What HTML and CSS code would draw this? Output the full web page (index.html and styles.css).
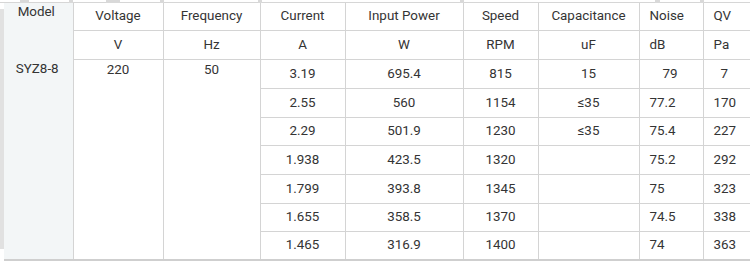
FILE: index.html
```html
<!DOCTYPE html>
<html>
<head>
<meta charset="utf-8">
<link rel="stylesheet" href="styles.css">
</head>
<body>
<div class="topbar">
  <span class="mk m1"></span><span class="mk m2"></span><span class="mk m3"></span><span class="mk m4"></span><span class="mk m5"></span><span class="mk m6"></span><span class="mk m7"></span><span class="mk m8"></span>
</div>
<div class="frame">
  <div class="strip"></div>
  <table class="spec">
    <colgroup>
      <col class="c-model"><col class="c-volt"><col class="c-freq"><col class="c-cur"><col class="c-pow"><col class="c-spd"><col class="c-cap"><col class="c-noise"><col class="c-qv">
    </colgroup>
    <tr class="hdr">
      <td class="model" rowspan="9"><div class="model-h">Model</div><div class="model-v">SYZ8-8</div></td>
      <td class="ctr">Voltage</td>
      <td class="ctr">Frequency</td>
      <td class="ctr">Current</td>
      <td class="ctr">Input Power</td>
      <td class="ctr nl">Speed</td>
      <td class="ctr nl">Capacitance</td>
      <td class="lft">Noise</td>
      <td class="lft">QV</td>
    </tr>
    <tr class="unit">
      <td class="ctr">V</td>
      <td class="ctr">Hz</td>
      <td class="ctr">A</td>
      <td class="ctr">W</td>
      <td class="ctr dl">RPM</td>
      <td class="ctr dl">uF</td>
      <td class="lft">dB</td>
      <td class="lft">Pa</td>
    </tr>
    <tr class="row">
      <td class="ctr top" rowspan="7">220</td>
      <td class="ctr top" rowspan="7">50</td>
      <td class="ctr">3.19</td>
      <td class="ctr">695.4</td>
      <td class="ctr dl">815</td>
      <td class="ctr dl">15</td>
      <td class="lft in1">79</td>
      <td class="lft in2">7</td>
    </tr>
    <tr class="row">
      <td class="ctr">2.55</td>
      <td class="ctr">560</td>
      <td class="ctr dl">1154</td>
      <td class="ctr dl">≤35</td>
      <td class="lft">77.2</td>
      <td class="lft">170</td>
    </tr>
    <tr class="row short">
      <td class="ctr">2.29</td>
      <td class="ctr">501.9</td>
      <td class="ctr dl">1230</td>
      <td class="ctr dl">≤35</td>
      <td class="lft">75.4</td>
      <td class="lft">227</td>
    </tr>
    <tr class="row">
      <td class="ctr">1.938</td>
      <td class="ctr">423.5</td>
      <td class="ctr dl">1320</td>
      <td class="ctr dl"></td>
      <td class="lft">75.2</td>
      <td class="lft">292</td>
    </tr>
    <tr class="row">
      <td class="ctr">1.799</td>
      <td class="ctr">393.8</td>
      <td class="ctr dl">1345</td>
      <td class="ctr dl"></td>
      <td class="lft">75</td>
      <td class="lft">323</td>
    </tr>
    <tr class="row short">
      <td class="ctr">1.655</td>
      <td class="ctr">358.5</td>
      <td class="ctr dl">1370</td>
      <td class="ctr dl"></td>
      <td class="lft">74.5</td>
      <td class="lft">338</td>
    </tr>
    <tr class="row">
      <td class="ctr">1.465</td>
      <td class="ctr">316.9</td>
      <td class="ctr dl">1400</td>
      <td class="ctr dl"></td>
      <td class="lft">74</td>
      <td class="lft">363</td>
    </tr>
  </table>
</div>
</body>
</html>
```

FILE: styles.css
```css
html, body {
  margin: 0;
  padding: 0;
  background: #ffffff;
}
body {
  font-family: Roboto, "Liberation Sans", sans-serif;
  font-size: 13.4px;
  color: #343434;
  width: 750px;
  height: 262px;
  overflow: hidden;
}
.topbar {
  height: 2px;
  border-bottom: 1px solid #d6d6d6;
  position: relative;
}
.mk {
  display: block;
  height: 3px;
  background: #d9d9d9;
  position: absolute;
  top: 0;
}
.m1 { left: 20px; width: 9px; }
.m2 { left: 69px; width: 4px; }
.m3 { left: 106px; width: 14px; }
.m4 { left: 160px; width: 4px; }
.m5 { left: 258px; width: 4px; }
.m6 { left: 460px; width: 4px; }
.m7 { left: 655px; width: 5px; }
.m8 { left: 700px; width: 4px; }

.frame {
  display: flex;
  align-items: flex-start;
}
.strip {
  width: 4px;
  height: 240px;
  margin-top: 6px;
  background: #e1e1e1;
  flex: none;
}
.spec {
  border-collapse: collapse;
  table-layout: fixed;
  width: 746px;
  border-bottom: 2px solid #cfcfcf;
}
.c-model { width: 69px; }
.c-volt { width: 90px; }
.c-freq { width: 97px; }
.c-cur { width: 85px; }
.c-pow { width: 118px; }
.c-spd { width: 75px; }
.c-cap { width: 101px; }
.c-noise { width: 64px; }
.c-qv { width: 47px; }

.spec td {
  padding: 0;
  border: 1px solid #d4d4d4;
  white-space: nowrap;
  line-height: 16px;
}
.hdr { height: 27px; }
.unit { height: 29px; }
.row { height: 29px; }
.row.short { height: 28px; }
.hdr td { border-top: none; }

.model {
  background: #f3f6f7;
  vertical-align: top;
  border-left: none !important;
  border-top: none !important;
  border-bottom: none !important;
  border-right: 1px dashed #dcdcdc !important;
}
.model-h {
  text-align: center;
  padding-top: 1px;
  padding-right: 4px;
}
.model-v {
  text-align: center;
  padding-top: 41px;
  padding-right: 2px;
}
.ctr { text-align: center; }
.spec td.lft { text-align: left; padding-left: 10px; }
.spec td.top { vertical-align: top; padding-top: 2px; }
.spec td.in1 { padding-left: 23px; }
.spec td.in2 { padding-left: 17px; }
.spec td.nl { border-left-color: transparent; }
.spec td.dl { border-left: 1px dashed #e6e6e6; }
.spec td.nl + td.lft { border-left: 1px solid #d4d4d4; }
.spec td.dl + td.lft { border-left: 1px solid #d4d4d4; }
.spec tr td:last-child { border-right: none; }
```
